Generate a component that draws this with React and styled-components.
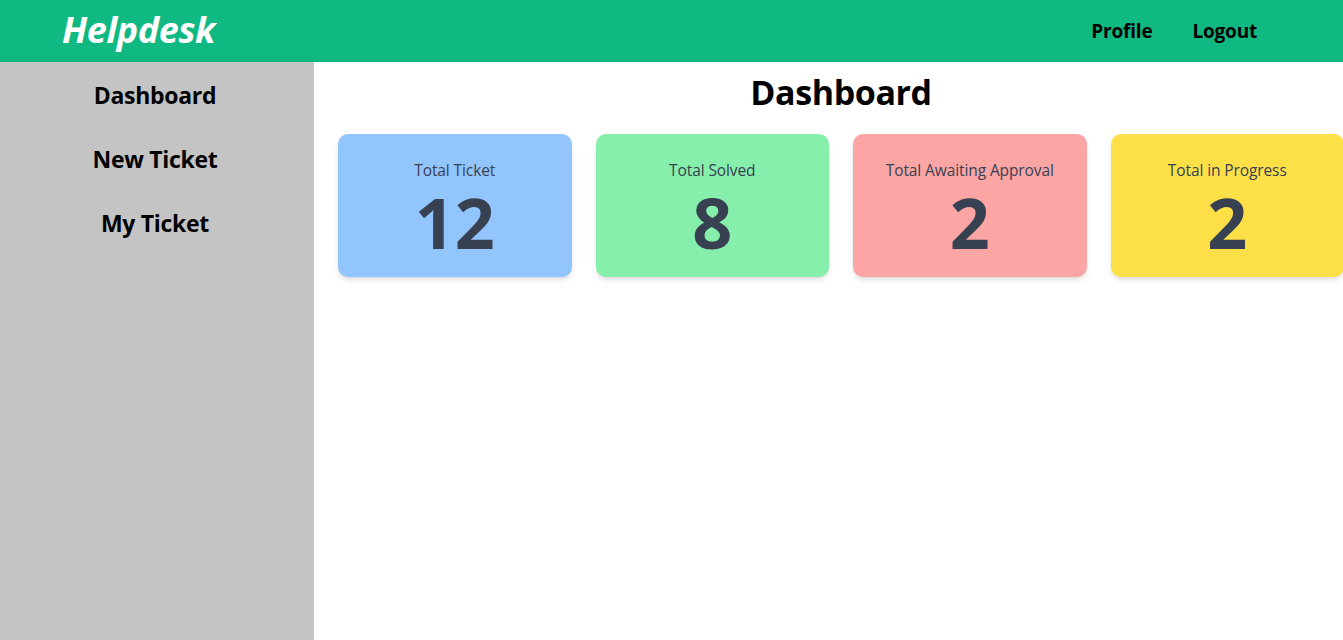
import React from "react";
import styled, { createGlobalStyle } from "styled-components";

const Global = createGlobalStyle`
  * { box-sizing: border-box; }
  html, body { margin: 0; padding: 0; }
  body {
    font-family: "Open Sans", "Noto Sans", sans-serif;
    background: #ffffff;
    overflow: hidden;
  }
`;

const Page = styled.div`
  display: flex;
  flex-direction: column;
  height: 640px;
  width: 1343px;
`;

const Header = styled.header`
  display: flex;
  align-items: center;
  justify-content: space-between;
  height: 62px;
  background: #10b981;
  padding: 0 86px 0 62px;
  flex-shrink: 0;
`;

const Logo = styled.h1`
  margin: 0;
  color: #ffffff;
  font-size: 36px;
  font-weight: 700;
  font-style: italic;
  letter-spacing: -0.4px;
  line-height: 1;
  margin-top: -2px;
`;

const Nav = styled.nav`
  display: flex;
  gap: 40px;
`;

const NavLink = styled.a`
  color: #000000;
  font-size: 19px;
  font-weight: 700;
  text-decoration: none;
  letter-spacing: -0.2px;
`;

const Body = styled.div`
  display: flex;
  flex: 1;
  min-height: 0;
`;

const Sidebar = styled.aside`
  width: 314px;
  flex-shrink: 0;
  background: #c4c4c4;
  display: flex;
  flex-direction: column;
  align-items: center;
  padding: 13px 4px 0 0;
  gap: 24px;
`;

const SideItem = styled.a`
  color: #000000;
  font-size: 23px;
  font-weight: 700;
  line-height: 40px;
  text-decoration: none;
  letter-spacing: -0.3px;
`;

const Main = styled.main`
  flex-shrink: 0;
  width: 1054px;
  padding: 10px 24px 24px;
`;

const Title = styled.h2`
  margin: 0 0 22px;
  text-align: center;
  font-size: 34px;
  line-height: 40px;
  font-weight: 700;
  color: #000000;
  letter-spacing: -0.4px;
`;

const Cards = styled.div`
  display: grid;
  grid-template-columns: repeat(4, 1fr);
  gap: 24px;
`;

const Card = styled.div`
  background: ${(p) => p.$bg};
  border-radius: 10px;
  padding: 23px 12px 0;
  height: 143px;
  display: flex;
  flex-direction: column;
  align-items: center;
  box-shadow: 0 4px 6px -1px rgba(0, 0, 0, 0.1), 0 2px 4px -2px rgba(0, 0, 0, 0.1);
  color: #374151;
`;

const Label = styled.div`
  font-size: 15.5px;
  line-height: 26px;
  letter-spacing: -0.1px;
`;

const Value = styled.div`
  font-size: 70px;
  font-weight: 700;
  line-height: 66px;
  margin-top: 6px;
`;

const stats = [
  { label: "Total Ticket", value: 12, bg: "#93c5fd" },
  { label: "Total Solved", value: 8, bg: "#86efac" },
  { label: "Total Awaiting Approval", value: 2, bg: "#fca5a5" },
  { label: "Total in Progress", value: 2, bg: "#fde047" },
];

export default function App() {
  return (
    <>
      <Global />
      <Page>
        <Header>
          <Logo>Helpdesk</Logo>
          <Nav>
            <NavLink href="#">Profile</NavLink>
            <NavLink href="#">Logout</NavLink>
          </Nav>
        </Header>
        <Body>
          <Sidebar>
            <SideItem href="#">Dashboard</SideItem>
            <SideItem href="#">New Ticket</SideItem>
            <SideItem href="#">My Ticket</SideItem>
          </Sidebar>
          <Main>
            <Title>Dashboard</Title>
            <Cards>
              {stats.map((s) => (
                <Card key={s.label} $bg={s.bg}>
                  <Label>{s.label}</Label>
                  <Value>{s.value}</Value>
                </Card>
              ))}
            </Cards>
          </Main>
        </Body>
      </Page>
    </>
  );
}
